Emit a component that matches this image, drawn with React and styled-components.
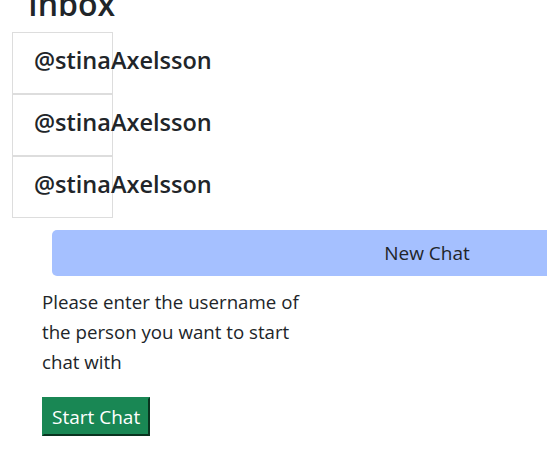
import React from "react";
import styled, { createGlobalStyle } from "styled-components";

const GlobalStyle = createGlobalStyle`
  body {
    margin: 0;
    font-family: "Open Sans", "Noto Sans", sans-serif;
    color: #212529;
    background: #fff;
    overflow: hidden;
  }
`;

const users = ["@stinaAxelsson", "@stinaAxelsson", "@stinaAxelsson"];

const App = () => {
  return (
    <Page>
      <GlobalStyle />
      <Title>Inbox</Title>
      <UserList>
        {users.map((cur, idx) => (
          <UserItem key={idx}>{cur}</UserItem>
        ))}
      </UserList>
      <NewChatButton>New Chat</NewChatButton>
      <Hint>Please enter the username of the person you want to start chat with</Hint>
      <StartButton>Start Chat</StartButton>
    </Page>
  );
};

const Page = styled.div`
  padding: 0 0 0 12px;
  width: 800px;
`;
const Title = styled.h2`
  font-size: 32px;
  font-weight: 600;
  line-height: 36px;
  margin: -14px 0 10px 16px;
`;
const UserList = styled.div`
  display: flex;
  flex-direction: column;
  width: 101px;
`;
const UserItem = styled.div`
  height: 62px;
  box-sizing: border-box;
  border: 1px solid #dddddd;
  padding: 0 0 6px 21px;
  display: flex;
  align-items: center;
  white-space: nowrap;
  font-size: 23.5px;
  font-weight: 600;
`;
const NewChatButton = styled.button`
  display: block;
  margin: 12px 0 0 40px;
  width: 750px;
  height: 46px;
  border: none;
  border-radius: 5px;
  background: #a5c0ff;
  color: #212529;
  font-family: inherit;
  font-size: 19px;
`;
const Hint = styled.p`
  margin: 11px 0 0 30px;
  width: 270px;
  font-size: 18.7px;
  line-height: 30px;
`;
const StartButton = styled.button`
  display: block;
  margin: 20px 0 0 30px;
  height: 39px;
  padding: 0 8px;
  border: 2px outset #198754;
  background: #198754;
  color: #fff;
  font-family: inherit;
  font-size: 19px;
`;

export default App;
